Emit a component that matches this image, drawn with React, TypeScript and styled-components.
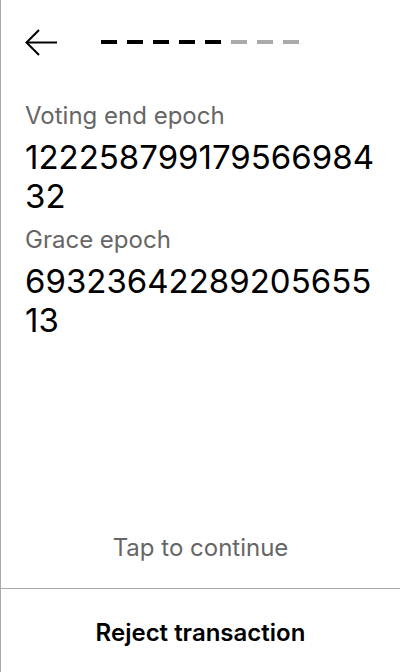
import React from "react";
import styled, { createGlobalStyle } from "styled-components";

const Global = createGlobalStyle`
  html, body { margin: 0; padding: 0; background: #fff; }
  body { font-family: Inter, "Noto Sans", sans-serif; }
`;

const Screen = styled.div`
  width: 400px;
  height: 672px;
  box-sizing: border-box;
  border-left: 1px solid #aaa;
  display: flex;
  flex-direction: column;
  background: #fff;
`;

const Header = styled.div`
  display: flex;
  align-items: center;
  height: 86px;
  padding: 0 0 0 23px;
  box-sizing: border-box;
`;

const BackButton = styled.button`
  border: none;
  background: none;
  padding: 0;
  width: 34px;
  height: 28px;
  display: flex;
  align-items: center;
  cursor: pointer;
`;

const Steps = styled.div`
  display: flex;
  gap: 10px;
  margin-left: 43px;
  margin-bottom: 2px;
`;

const Step = styled.div<{ $done: boolean }>`
  width: 16px;
  height: 4px;
  background: ${(p) => (p.$done ? "#000" : "#aaa")};
`;

const Content = styled.div`
  flex: 1;
  padding: 15px 24px 0 24px;
  display: flex;
  flex-direction: column;
`;

const Label = styled.div`
  font-size: 24px;
  line-height: 30px;
  color: #666;
`;

const Value = styled.div`
  font-size: 33px;
  line-height: 39px;
  color: #000;
  word-break: break-all;
  padding: 7px 0 9px;
`;

const Tap = styled.div`
  text-align: center;
  font-size: 24px;
  line-height: 30px;
  color: #666;
  padding-bottom: 25px;
`;

const Footer = styled.button`
  border: none;
  border-top: 1px solid #aaa;
  background: none;
  height: 84px;
  padding: 3px 0 0;
  font-family: Inter, "Noto Sans", sans-serif;
  font-size: 24px;
  font-weight: 600;
  color: #000;
  cursor: pointer;
`;

export default function App() {
  return (
    <>
      <Global />
      <Screen>
        <Header>
          <BackButton aria-label="Back">
            <svg width="34" height="28" viewBox="0 0 34 28" fill="none" stroke="#000" strokeWidth="2">
              <path d="M33 13.5H2.5" />
              <path d="M15 1L2.5 13.5L15 26" />
            </svg>
          </BackButton>
          <Steps>
            {[0, 1, 2, 3, 4, 5, 6, 7].map((i) => (
              <Step key={i} $done={i < 5} />
            ))}
          </Steps>
        </Header>
        <Content>
          <Label>Voting end epoch</Label>
          <Value>12225879917956698432</Value>
          <Label>Grace epoch</Label>
          <Value>6932364228920565513</Value>
        </Content>
        <Tap>Tap to continue</Tap>
        <Footer>Reject transaction</Footer>
      </Screen>
    </>
  );
}
